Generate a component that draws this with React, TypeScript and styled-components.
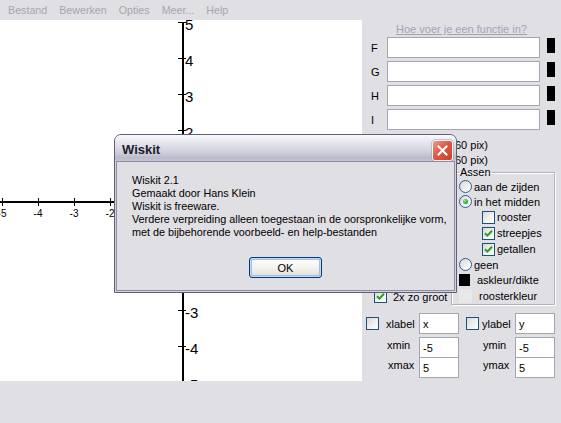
import React from "react";
import styled, { createGlobalStyle } from "styled-components";

const Global = createGlobalStyle`
  html, body { margin: 0; padding: 0; }
  body { background: #e0dfe3; font-family: "Liberation Sans", Arial, sans-serif; font-size: 11px; }
`;

const Screen = styled.div`
  position: relative;
  width: 561px;
  height: 423px;
  overflow: hidden;
  background: #e0dfe3;
  font-family: "Liberation Sans", Arial, sans-serif;
  font-size: 11px;
  color: #000;
  display: flex;
  flex-direction: column;
`;

const MenuBar = styled.div`
  height: 20px;
  flex: none;
  display: flex;
  align-items: center;
  padding-left: 2px;
`;

const MenuItem = styled.span`
  padding: 0 6px;
  font-size: 10.7px;
  line-height: 20px;
  color: #a6a6ad;
`;

const Main = styled.div`
  display: flex;
  height: 361px;
  flex: none;
`;

const Canvas = styled.div`
  width: 362px;
  height: 361px;
  flex: none;
  background: #fff;
  overflow: hidden;
`;

const Panel = styled.div`
  flex: 1;
  display: flex;
  flex-direction: column;
  min-width: 0;
`;

const HelpLink = styled.a`
  display: block;
  margin-top: 3px;
  margin-bottom: 1px;
  line-height: 13px;
  text-align: center;
  color: #a3a3b3;
  text-decoration: underline;
  cursor: default;
`;

const FuncRow = styled.div`
  display: flex;
  align-items: center;
  height: 21px;
  margin-bottom: 3px;
`;

const FuncLabel = styled.span`
  width: 25px;
  padding-left: 9px;
  box-sizing: border-box;
  flex: none;
`;

const TextField = styled.input<{ $w: number }>`
  width: ${(p) => p.$w}px;
  height: 21px;
  box-sizing: border-box;
  border: 1px solid #a1a6b0;
  background: #fff;
  padding: 0 3px;
  margin: 0;
  font-family: "Liberation Sans", Arial, sans-serif;
  font-size: 11px;
  color: #000;
  outline: none;
  flex: none;
`;

const Swatch = styled.span<{ $color: string; $w: number; $h: number }>`
  display: inline-block;
  width: ${(p) => p.$w}px;
  height: ${(p) => p.$h}px;
  background: ${(p) => p.$color};
  flex: none;
`;

const FuncSwatch = styled(Swatch)`
  margin-left: 7px;
  align-self: flex-start;
  margin-top: 1px;
`;

const PixBlock = styled.div`
  width: 126px;
  padding-top: 5px;
  text-align: right;
  line-height: 15px;
  white-space: nowrap;
`;

const MidSection = styled.div`
  display: flex;
  margin-top: -2px;
`;

const LeftCol = styled.div`
  width: 89px;
  flex: none;
  display: flex;
  flex-direction: column;
  justify-content: flex-end;
  padding-bottom: 1px;
`;

const GroupBox = styled.fieldset`
  width: 104px;
  box-sizing: border-box;
  margin: 0;
  padding: 0 0 0 7px;
  border: 1px solid #b2b2bc;
  box-shadow: inset 1px 1px 0 #fff, 1px 1px 0 #fff;
  min-width: 0;
`;

const Legend = styled.legend`
  padding: 0 1px;
  margin-left: 0;
  line-height: 13px;
  font-size: 11px;
`;

const GroupRow = styled.div<{ $h: number; $indent?: number; $gap: number }>`
  height: ${(p) => p.$h}px;
  display: flex;
  align-items: center;
  padding-left: ${(p) => p.$indent ?? 0}px;
  gap: ${(p) => p.$gap}px;
  white-space: nowrap;
`;

const CheckRow = styled.div`
  display: flex;
  align-items: center;
  gap: 6px;
  height: 15px;
  padding-left: 12px;
  white-space: nowrap;
`;

const BoxOuter = styled.span`
  width: 13px;
  height: 13px;
  box-sizing: border-box;
  border: 1px solid #1c5180;
  background: linear-gradient(135deg, #d6d6d2 0%, #efefec 50%, #ffffff 100%);
  display: inline-flex;
  align-items: center;
  justify-content: center;
  flex: none;
`;

const RadioOuter = styled.span`
  width: 13px;
  height: 13px;
  box-sizing: border-box;
  border-radius: 50%;
  border: 1px solid #2f5e8e;
  background: linear-gradient(135deg, #d6d6d2 0%, #f0f0ee 55%, #ffffff 100%);
  display: inline-flex;
  align-items: center;
  justify-content: center;
  flex: none;
`;

const RadioDot = styled.span`
  width: 5px;
  height: 5px;
  border-radius: 50%;
  background: radial-gradient(circle at 35% 35%, #a9e79b 0%, #2fb02f 55%, #1d861d 100%);
`;

const AxisFields = styled.div`
  display: flex;
  gap: 7px;
  padding-left: 4px;
  margin-top: 8px;
`;

const FieldGroup = styled.div`
  display: flex;
  flex-direction: column;
`;

const FieldRow = styled.div<{ $mt: number }>`
  display: flex;
  align-items: center;
  height: 21px;
  margin-top: ${(p) => p.$mt}px;
`;

const FieldCell = styled.div<{ $w: number; $indent: number; $gap: number; $raise?: boolean }>`
  width: ${(p) => p.$w}px;
  flex: none;
  display: flex;
  align-items: center;
  gap: ${(p) => p.$gap}px;
  padding-left: ${(p) => p.$indent}px;
  padding-bottom: ${(p) => (p.$raise ? 5 : 0)}px;
  box-sizing: border-box;
  white-space: nowrap;
`;

/* Dialog */

const Dialog = styled.div`
  position: absolute;
  left: 114px;
  top: 134px;
  width: 343px;
  height: 159px;
  box-sizing: border-box;
  border: 1px solid #5e5e7c;
  border-radius: 7px 7px 0 0;
  background: #d2d2dc;
  padding: 0 1px 1px;
  display: flex;
  flex-direction: column;
  overflow: hidden;
`;

const TitleBar = styled.div`
  height: 26px;
  flex: none;
  margin: 0 -1px;
  padding: 0 3px 0 7px;
  display: flex;
  align-items: flex-start;
  justify-content: space-between;
  background: linear-gradient(
    to bottom,
    #fbfbfd 0%,
    #ececf2 18%,
    #dcdce6 45%,
    #cdcdda 70%,
    #b9b9ca 88%,
    #c6c6d4 100%
  );
`;

const Title = styled.span`
  font-family: "Liberation Sans", Arial, sans-serif;
  font-weight: bold;
  font-size: 13px;
  line-height: 30px;
  color: #1c1c2c;
`;

const CloseButton = styled.span`
  margin-top: 5px;
  width: 21px;
  height: 21px;
  box-sizing: border-box;
  border: 1px solid #f3f3f6;
  border-radius: 3px;
  background: linear-gradient(135deg, #f09a86 0%, #de5a45 45%, #c4412e 100%);
  display: inline-flex;
  align-items: center;
  justify-content: center;
  box-shadow: 0 0 0 0.5px #9c9cae;
`;

const Client = styled.div`
  flex: 1;
  border: 1px solid #8c8ca4;
  background: #e0dfe3;
  padding: 12px 15px 0;
  display: flex;
  flex-direction: column;
`;

const Message = styled.div`
  font-size: 10.8px;
  line-height: 13px;
  white-space: nowrap;
`;

const ButtonRow = styled.div`
  display: flex;
  justify-content: center;
  margin-top: 18px;
`;

const OkButton = styled.button`
  width: 73px;
  height: 21px;
  box-sizing: border-box;
  border: 1px solid #003c74;
  border-radius: 3px;
  background: linear-gradient(to bottom, #ffffff 0%, #f3f3ef 50%, #e6e4dd 85%, #d6d2c8 100%);
  box-shadow: inset 0 0 0 1px #c3d7f7, inset 0 0 0 2px #a2bdef;
  font-family: "Liberation Sans", Arial, sans-serif;
  font-size: 11px;
  color: #000;
  padding: 0;
`;

function CheckBox({ checked }: { checked?: boolean }) {
  return (
    <BoxOuter>
      {checked && (
        <svg width="9" height="9" viewBox="0 0 9 9">
          <path d="M1 4.2 L3.4 6.6 L8 1.8" fill="none" stroke="#21a121" strokeWidth="2" />
        </svg>
      )}
    </BoxOuter>
  );
}

function Radio({ checked }: { checked?: boolean }) {
  return <RadioOuter>{checked && <RadioDot />}</RadioOuter>;
}

const U = 36;
const O = 182;
const values = [-5, -4, -3, -2, -1, 1, 2, 3, 4, 5];
/* labels that stay visible around the modal dialog */
const yLabels = [5, 4, 3, 2, -3, -4, -5];
const xLabels = [-5, -4, -3, -2];

function Graph() {
  return (
    <svg width="362" height="361" viewBox="0 0 362 361">
      <line x1={O + 1} y1={O - 5 * U} x2={O + 1} y2={O + 5 * U + 2} stroke="#000" strokeWidth="2" />
      <line x1={0} y1={O} x2={O + 5 * U} y2={O} stroke="#000" strokeWidth="2" />
      {values.map((v) => (
        <line key={"yt" + v} x1={O - 4} y1={O - v * U + 0.5} x2={O + 4} y2={O - v * U + 0.5} stroke="#000" strokeWidth="1" />
      ))}
      {values.map((v) => (
        <line key={"xt" + v} x1={O + v * U + 0.5} y1={O - 4} x2={O + v * U + 0.5} y2={O + 4} stroke="#000" strokeWidth="1" />
      ))}
      {yLabels.map((v) => (
        <text
          key={"yl" + v}
          x={O + 3}
          y={O - v * U + 8}
          fontFamily="Liberation Sans, Arial, sans-serif"
          fontSize="15"
          fill="#000"
        >
          {v}
        </text>
      ))}
      {xLabels.map((v) => (
        <text
          key={"xl" + v}
          x={O + v * U}
          y={O + 15}
          textAnchor="middle"
          fontFamily="Liberation Sans, Arial, sans-serif"
          fontSize="10"
          fill="#000"
        >
          {v}
        </text>
      ))}
    </svg>
  );
}

export default function App() {
  return (
    <>
      <Global />
      <Screen>
        <MenuBar>
          <MenuItem>Bestand</MenuItem>
          <MenuItem>Bewerken</MenuItem>
          <MenuItem>Opties</MenuItem>
          <MenuItem>Meer...</MenuItem>
          <MenuItem>Help</MenuItem>
        </MenuBar>
        <Main>
          <Canvas>
            <Graph />
          </Canvas>
          <Panel>
            <HelpLink>Hoe voer je een functie in?</HelpLink>
            {["F", "G", "H", "I"].map((f) => (
              <FuncRow key={f}>
                <FuncLabel>{f}</FuncLabel>
                <TextField $w={153} readOnly value="" />
                <FuncSwatch $color="#000" $w={8} $h={15} />
              </FuncRow>
            ))}
            <PixBlock>
              <div>breedte (360 pix)</div>
              <div>hoogte (360 pix)</div>
            </PixBlock>
            <MidSection>
              <LeftCol>
                <CheckRow>
                  <CheckBox checked />
                  <span>2x zo groot</span>
                </CheckRow>
              </LeftCol>
              <GroupBox>
                <Legend>Assen</Legend>
                <GroupRow $h={15} $gap={2}>
                  <Radio />
                  <span>aan de zijden</span>
                </GroupRow>
                <GroupRow $h={15} $gap={2}>
                  <Radio checked />
                  <span>in het midden</span>
                </GroupRow>
                <GroupRow $h={16} $gap={2} $indent={23}>
                  <CheckBox />
                  <span>rooster</span>
                </GroupRow>
                <GroupRow $h={16} $gap={2} $indent={23}>
                  <CheckBox checked />
                  <span>streepjes</span>
                </GroupRow>
                <GroupRow $h={16} $gap={2} $indent={23}>
                  <CheckBox checked />
                  <span>getallen</span>
                </GroupRow>
                <GroupRow $h={15} $gap={2}>
                  <Radio />
                  <span>geen</span>
                </GroupRow>
                <GroupRow $h={15} $gap={7}>
                  <Swatch $color="#000" $w={11} $h={12} />
                  <span>askleur/dikte</span>
                </GroupRow>
                <GroupRow $h={17} $gap={7}>
                  <Swatch $color="#e8e8ea" $w={13} $h={14} />
                  <span>roosterkleur</span>
                </GroupRow>
              </GroupBox>
            </MidSection>
            <AxisFields>
              <FieldGroup>
                <FieldRow $mt={0}>
                  <FieldCell $w={53} $indent={0} $gap={7}>
                    <CheckBox />
                    <span>xlabel</span>
                  </FieldCell>
                  <TextField $w={40} readOnly value="x" />
                </FieldRow>
                <FieldRow $mt={3}>
                  <FieldCell $w={53} $indent={21} $gap={0} $raise>
                    xmin
                  </FieldCell>
                  <TextField $w={40} readOnly value="-5" />
                </FieldRow>
                <FieldRow $mt={-1}>
                  <FieldCell $w={53} $indent={22} $gap={0} $raise>
                    xmax
                  </FieldCell>
                  <TextField $w={40} readOnly value="5" />
                </FieldRow>
              </FieldGroup>
              <FieldGroup>
                <FieldRow $mt={0}>
                  <FieldCell $w={49} $indent={0} $gap={3}>
                    <CheckBox />
                    <span>ylabel</span>
                  </FieldCell>
                  <TextField $w={40} readOnly value="y" />
                </FieldRow>
                <FieldRow $mt={3}>
                  <FieldCell $w={49} $indent={17} $gap={0} $raise>
                    ymin
                  </FieldCell>
                  <TextField $w={40} readOnly value="-5" />
                </FieldRow>
                <FieldRow $mt={-1}>
                  <FieldCell $w={49} $indent={17} $gap={0} $raise>
                    ymax
                  </FieldCell>
                  <TextField $w={40} readOnly value="5" />
                </FieldRow>
              </FieldGroup>
            </AxisFields>
          </Panel>
        </Main>
        <Dialog role="dialog">
          <TitleBar>
            <Title>Wiskit</Title>
            <CloseButton>
              <svg width="11" height="11" viewBox="0 0 11 11">
                <path d="M1.5 1.5 L9.5 9.5 M9.5 1.5 L1.5 9.5" stroke="#fff" strokeWidth="2" strokeLinecap="square" />
              </svg>
            </CloseButton>
          </TitleBar>
          <Client>
            <Message>
              <div>Wiskit 2.1</div>
              <div>Gemaakt door Hans Klein</div>
              <div>Wiskit is freeware.</div>
              <div>Verdere verpreiding alleen toegestaan in de oorspronkelijke vorm,</div>
              <div>met de bijbehorende voorbeeld- en help-bestanden</div>
            </Message>
            <ButtonRow>
              <OkButton>OK</OkButton>
            </ButtonRow>
          </Client>
        </Dialog>
      </Screen>
    </>
  );
}
